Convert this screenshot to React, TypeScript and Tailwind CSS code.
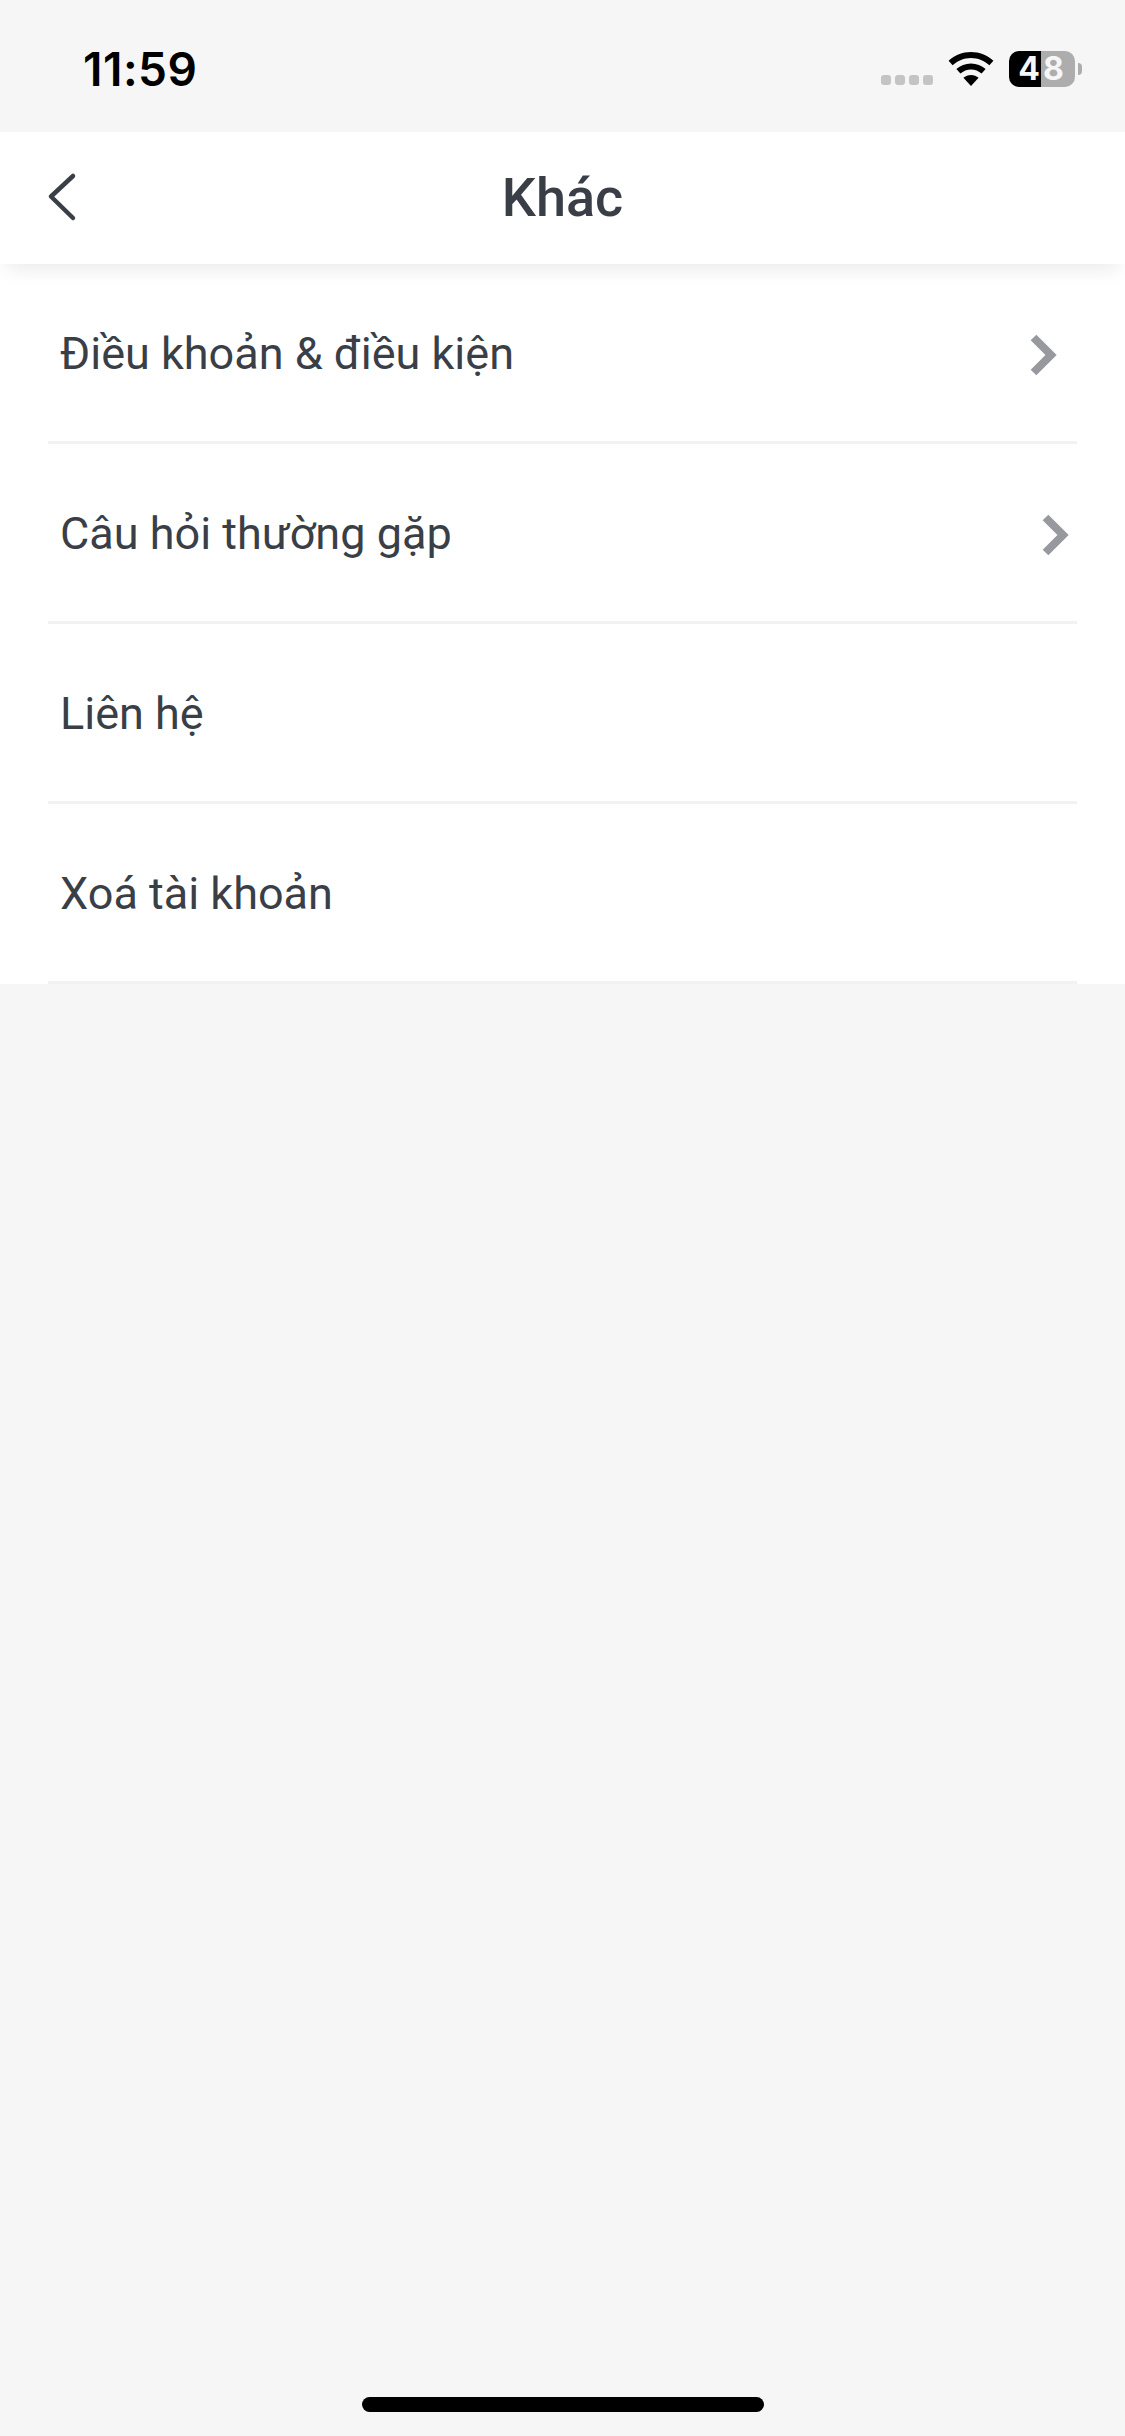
import React from 'react';

const rows = [
  { label: 'Điều khoản & điều kiện', chevron: true, padding: 'pr-[20px]' },
  { label: 'Câu hỏi thường gặp', chevron: true, padding: 'pr-[8px]' },
  { label: 'Liên hệ', chevron: false, padding: 'pr-[20px]' },
  { label: 'Xoá tài khoản', chevron: false, padding: 'pr-[20px]' },
];

const Chevron = () => (
  <svg width="27" height="44" viewBox="0 0 27 44" fill="none" className="mt-[2px] shrink-0">
    <path d="M3.500 4.500 L21 22 L3.500 39.500" stroke="#97999e" strokeWidth="8" strokeLinecap="butt" strokeLinejoin="miter" />
  </svg>
);

const StatusBar = () => (
  <div className="flex h-[132px] items-start justify-between pl-[83px] pr-[43px]">
    <span className="mt-[40px] text-[46px] leading-[58px] font-semibold tracking-[0.5px] text-black font-['Inter',sans-serif]">11:59</span>
    <div className="mt-[51px] flex items-start">
      <div className="mt-[24px] flex gap-[4px]">
        <span className="h-[10px] w-[10px] rounded-[3px] bg-[#c4c4c4]" />
        <span className="h-[10px] w-[10px] rounded-[3px] bg-[#c4c4c4]" />
        <span className="h-[10px] w-[10px] rounded-[3px] bg-[#c4c4c4]" />
        <span className="h-[10px] w-[10px] rounded-[3px] bg-[#c4c4c4]" />
      </div>
      <svg width="46" height="34" viewBox="0 0 46 34" className="ml-[15px] mt-[1px]">
        <path d="M23 0C14.5 0 6.7 3.300 0.600 8.700L4.600 13.200C9.600 8.800 16 6 23 6s13.400 2.800 18.400 7.200l4-4.500C39.300 3.300 31.500 0 23 0Z" fill="#000" />
        <path d="M23 11.500c-5.600 0-10.700 2.100-14.600 5.500l4 4.600c2.900-2.500 6.600-4.100 10.600-4.100s7.700 1.600 10.600 4.100l4-4.600c-3.900-3.400-9-5.500-14.600-5.500Z" fill="#000" />
        <path d="M23 23c-2.900 0-5.600 1.100-7.600 2.800L23 34l7.600-8.200C28.600 24.100 25.900 23 23 23Z" fill="#000" />
      </svg>
      <div className="ml-[15px] flex h-[36px] w-[66px] font-['Inter',sans-serif] text-[32px] leading-[36px] font-bold">
        <span className="flex w-[32px] justify-end rounded-l-[10px] bg-black pr-[1px] text-[#f6f6f6]">4</span>
        <span className="flex w-[34px] justify-start rounded-r-[10px] bg-[#adadad] pl-[2px] text-[#f6f6f6]">8</span>
      </div>
      <span className="ml-[3px] mt-[12px] h-[12px] w-[4px] rounded-r-[4px] bg-[#adadad]" />
    </div>
  </div>
);

const Header = () => (
  <div className="relative z-10 flex h-[132px] items-center justify-center bg-white pb-[2px] shadow-[0_12px_18px_-6px_rgba(0,0,0,0.08)]">
    <svg width="30" height="50" viewBox="0 0 30 50" fill="none" className="absolute left-[47px] top-[40px]">
      <path d="M26 4 L4 24.500 L26 46" stroke="#3a3f47" strokeWidth="4.500" strokeLinecap="round" strokeLinejoin="round" />
    </svg>
    <h1 className="text-[54px] font-medium text-[#3a3f47] font-['Roboto',sans-serif]">Khác</h1>
  </div>
);

export default function App() {
  return (
    <div className="flex h-[2436px] flex-col overflow-hidden bg-[#f6f6f6]">
      <StatusBar />
      <Header />
      <div className="bg-white px-[48px]">
        {rows.map((row) => (
          <div
            key={row.label}
            className={`flex h-[180px] items-center justify-between border-b-[3px] border-[#f1f2f3] pl-[12px] pt-[3px] ${row.padding}`}
          >
            <span className="text-[45px] text-[#3a3f47] font-['Roboto',sans-serif]">{row.label}</span>
            {row.chevron && <Chevron />}
          </div>
        ))}
      </div>
      <div className="mt-auto mb-[24px] flex justify-center">
        <div className="h-[15px] w-[402px] rounded-full bg-black" />
      </div>
    </div>
  );
}
